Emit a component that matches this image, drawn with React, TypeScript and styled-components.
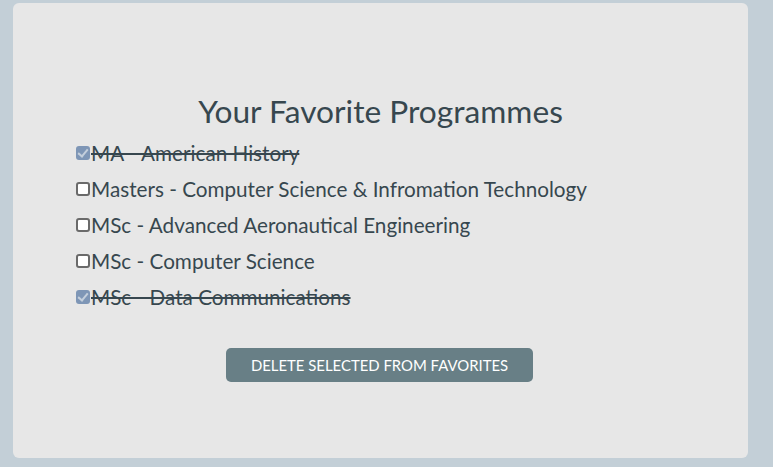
import React, { useState } from "react";
import styled, { createGlobalStyle } from "styled-components";

const GlobalStyle = createGlobalStyle`
  html, body {
    margin: 0;
    padding: 0;
    background: #c3cfd7;
  }
  body {
    font-family: Lato, "Open Sans", "Liberation Sans", sans-serif;
  }
`;

const Page = styled.main`
  padding: 3px 25px 9px 13px;
`;

const Card = styled.section`
  height: 455px;
  box-sizing: border-box;
  background: #e7e7e7;
  border-radius: 6px;
  padding: 88px 0 0 63px;
  display: flex;
  flex-direction: column;
`;

const Title = styled.h2`
  margin: 0 63px 4px 0;
  text-align: center;
  font-size: 31.7px;
  font-weight: 400;
  color: #37474f;
  line-height: 40px;
`;

const List = styled.ul`
  list-style: none;
  margin: 0;
  padding: 0;
  display: flex;
  flex-direction: column;
`;

const Item = styled.li`
  height: 36px;
  display: flex;
  align-items: center;
`;

const Label = styled.label<{ $done: boolean }>`
  display: inline-flex;
  align-items: center;
  font-size: 20.7px;
  color: #37474f;
  text-decoration: ${(p) => (p.$done ? "line-through" : "none")};
  cursor: pointer;
`;

const Box = styled.input`
  appearance: none;
  margin: 0 1px 0 0;
  width: 14px;
  height: 14px;
  box-sizing: border-box;
  border: 2px solid #6a6a6a;
  border-radius: 3px;
  background: #fff;
  position: relative;
  cursor: pointer;

  &:checked {
    border: none;
    background: #7e96b6;
  }
  &:checked::after {
    content: "";
    position: absolute;
    left: 4px;
    top: 1px;
    width: 4px;
    height: 8px;
    border: solid #c4cfdc;
    border-width: 0 2px 2px 0;
    transform: rotate(40deg);
  }
`;

const Actions = styled.div`
  display: flex;
  justify-content: center;
  margin: 33px 65px 0 0;
`;

const DeleteButton = styled.button`
  width: 307px;
  height: 34px;
  border: none;
  border-radius: 5px;
  background: #687f86;
  color: #fff;
  font-family: Lato, "Open Sans", "Liberation Sans", sans-serif;
  font-size: 14.9px;
  text-transform: uppercase;
  cursor: pointer;
`;

const programmes = [
  "MA - American History",
  "Masters - Computer Science & Infromation Technology",
  "MSc - Advanced Aeronautical Engineering",
  "MSc - Computer Science",
  "MSc - Data Communications",
];

const App = () => {
  const [selected, setSelected] = useState<boolean[]>([true, false, false, false, true]);

  const toggle = (i: number) => {
    setSelected((prev) => prev.map((v, j) => (j === i ? !v : v)));
  };

  return (
    <>
      <GlobalStyle />
      <Page>
        <Card>
          <Title>Your Favorite Programmes</Title>
          <List>
            {programmes.map((name, i) => (
              <Item key={name}>
                <Label $done={selected[i]}>
                  <Box type="checkbox" checked={selected[i]} onChange={() => toggle(i)} />
                  {name}
                </Label>
              </Item>
            ))}
          </List>
          <Actions>
            <DeleteButton>Delete selected from favorites</DeleteButton>
          </Actions>
        </Card>
      </Page>
    </>
  );
};

export default App;
